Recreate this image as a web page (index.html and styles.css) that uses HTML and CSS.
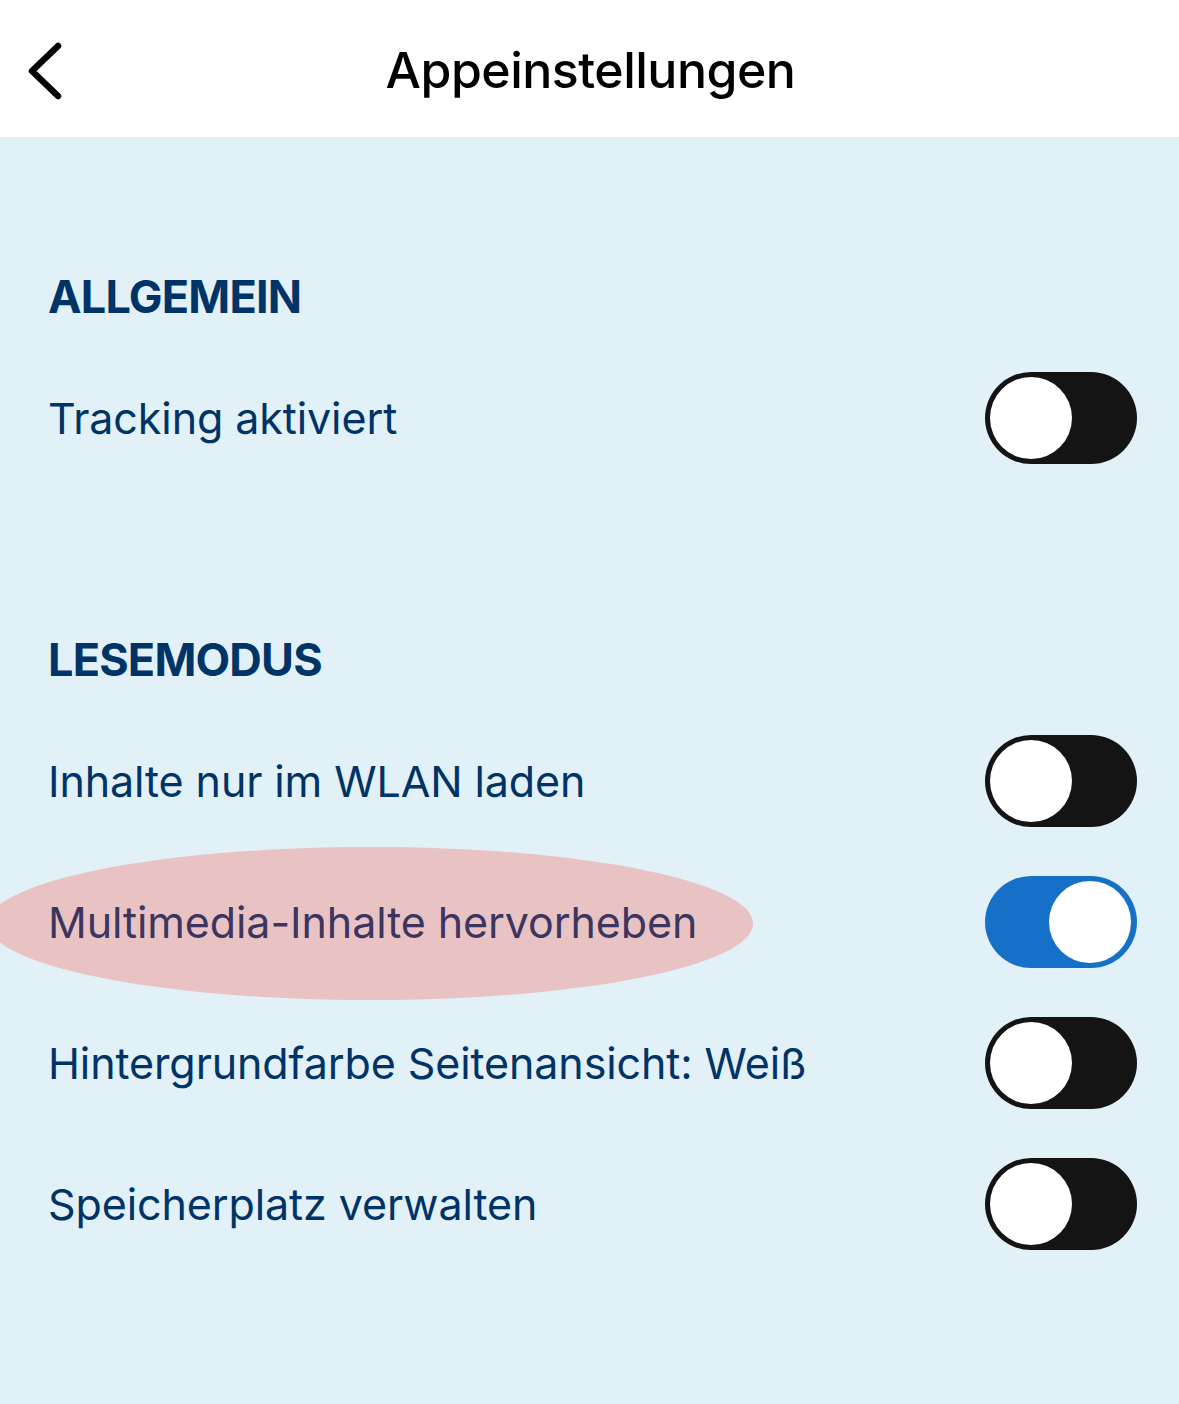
FILE: index.html
```html
<!DOCTYPE html>
<html lang="de">
<head>
<meta charset="utf-8">
<title>Appeinstellungen</title>
<link rel="stylesheet" href="styles.css">
</head>
<body>
<header class="topbar">
  <button class="back" aria-label="Zurück">
    <svg width="80" height="137" viewBox="0 0 80 137"><polyline points="58,46 32,71 58,96" fill="none" stroke="#000" stroke-width="6.5" stroke-linecap="round" stroke-linejoin="round"/></svg>
  </button>
  <h1 class="title">Appeinstellungen</h1>
</header>
<main class="content">
  <section class="group">
    <h2 class="group-title">ALLGEMEIN</h2>
    <div class="row"><span class="label">Tracking aktiviert</span><span class="toggle"><span class="knob"></span></span></div>
  </section>
  <section class="group">
    <h2 class="group-title">LESEMODUS</h2>
    <div class="row"><span class="label">Inhalte nur im WLAN laden</span><span class="toggle"><span class="knob"></span></span></div>
    <div class="row highlighted"><span class="mark"></span><span class="label">Multimedia-Inhalte hervorheben</span><span class="toggle on"><span class="knob"></span></span></div>
    <div class="row"><span class="label">Hintergrundfarbe Seitenansicht: Weiß</span><span class="toggle"><span class="knob"></span></span></div>
    <div class="row"><span class="label">Speicherplatz verwalten</span><span class="toggle"><span class="knob"></span></span></div>
  </section>
</main>
</body>
</html>
```
FILE: styles.css
```css
html, body {
  margin: 0;
  padding: 0;
}
body {
  width: 1179px;
  height: 1404px;
  overflow: hidden;
  background: #e2f0f7;
  font-family: Inter, "Noto Sans", sans-serif;
}
.topbar {
  position: relative;
  height: 137px;
  background: #ffffff;
  display: flex;
  align-items: center;
  justify-content: center;
}
.back {
  position: absolute;
  left: 0;
  top: 0;
  width: 80px;
  height: 137px;
  padding: 0;
  border: 0;
  background: none;
}
.back svg { display: block; }
.title {
  margin: 0;
  font-size: 50px;
  font-weight: 500;
  color: #000;
  line-height: 137px;
  letter-spacing: -0.5px;
  padding-left: 2px;
  padding-top: 4px;
}
.content {
  padding: 130px 42px 0 48px;
}
.group + .group {
  margin-top: 142px;
}
.group-title {
  margin: 0 0 20px;
  height: 60px;
  line-height: 60px;
  font-size: 45px;
  font-weight: 700;
  color: #003366;
  letter-spacing: -0.8px;
}
.row {
  position: relative;
  height: 141px;
  display: flex;
  align-items: center;
  justify-content: space-between;
}
.label {
  position: relative;
  z-index: 1;
  font-size: 43px;
  font-weight: 400;
  color: #003366;
  line-height: 60px;
  letter-spacing: -0.1px;
}
.highlighted .label {
  color: #3c3560;
}
.mark {
  position: absolute;
  z-index: 0;
  left: -60px;
  top: -4px;
  width: 765px;
  height: 153px;
  border-radius: 50%;
  background: #e9c3c3;
}
.toggle {
  position: relative;
  z-index: 1;
  width: 152px;
  height: 92px;
  border-radius: 46px;
  background: #141414;
  flex: none;
}
.toggle .knob {
  position: absolute;
  top: 5px;
  left: 5px;
  width: 82px;
  height: 82px;
  border-radius: 50%;
  background: #fff;
}
.toggle.on {
  background: #1670c8;
}
.toggle.on .knob {
  left: auto;
  right: 6px;
}
```
